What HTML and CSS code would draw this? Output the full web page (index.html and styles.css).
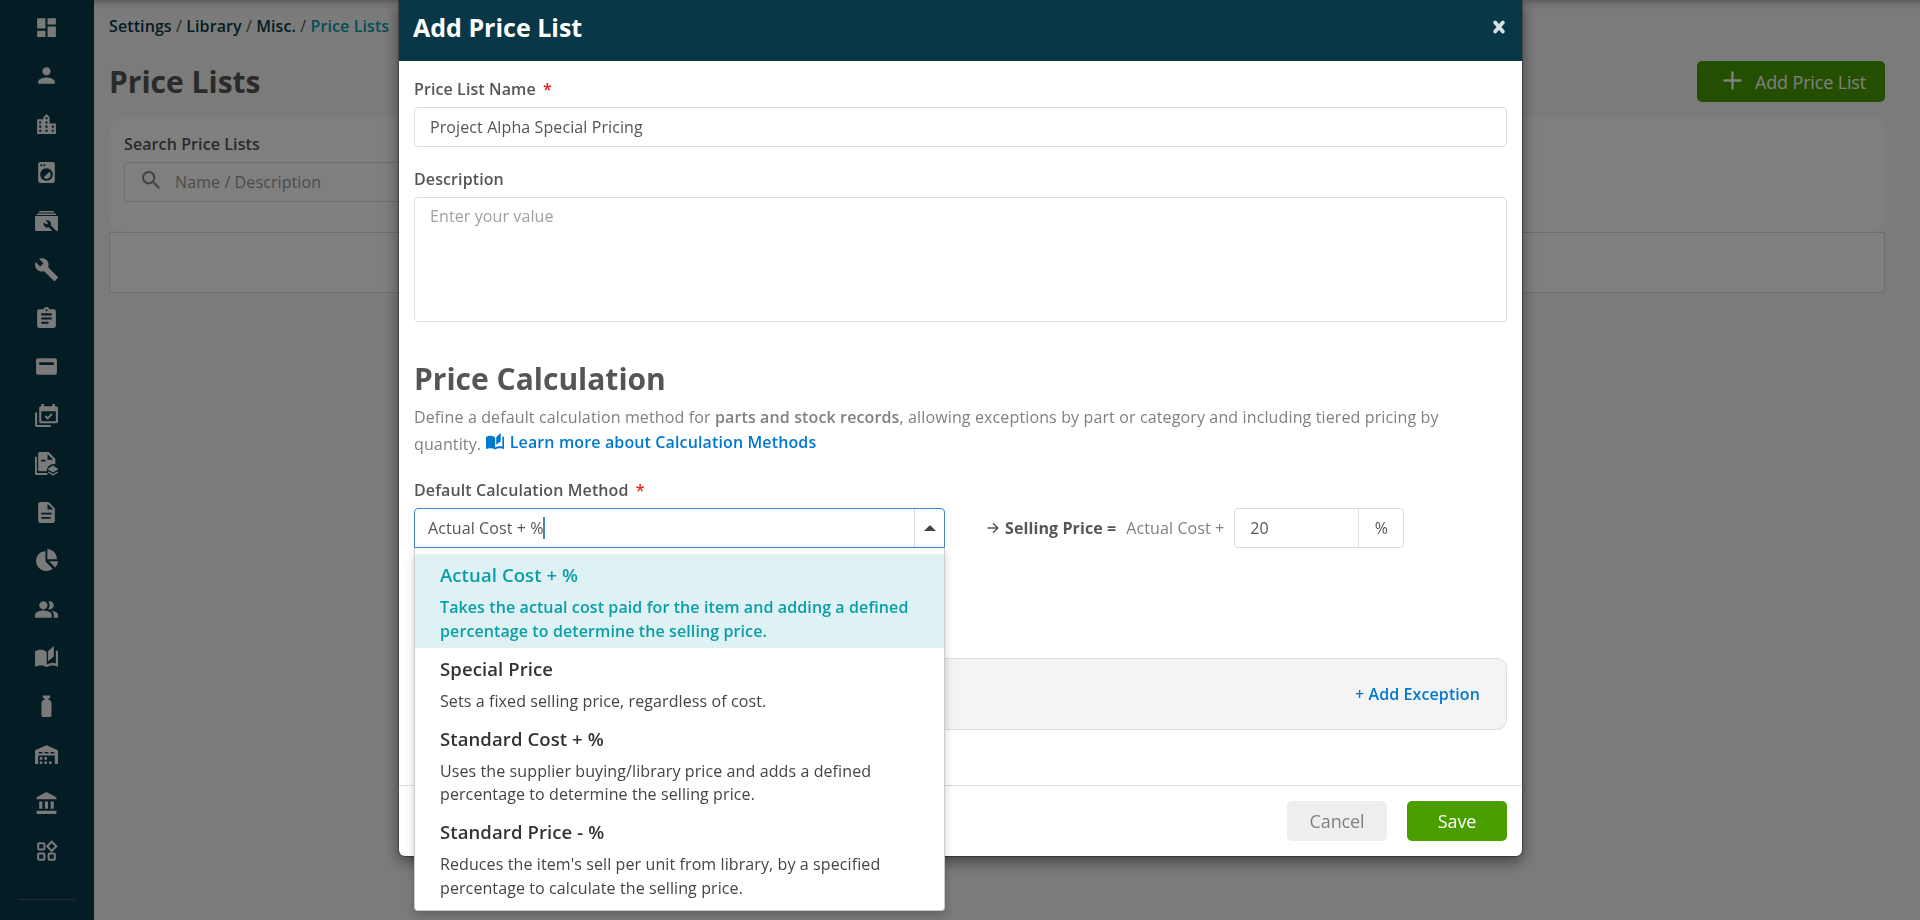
FILE: index.html
```html
<!DOCTYPE html>
<html lang="en">
<head>
    <meta charset="UTF-8">
    <meta name="viewport" content="width=device-width, initial-scale=1.0">
    <title>Price Lists</title>
    <link rel="stylesheet" href="styles.css">
</head>
<body>
    <div class="app">
        <nav class="sidebar">
            <svg viewBox="0 0 24 24"><path d="M3 13h8V3H3v10zm0 8h8v-6H3v6zm10 0h8V11h-8v10zm0-18v6h8V3h-8z"/></svg>
            <svg viewBox="0 0 24 24"><path d="M12 12c2.21 0 4-1.79 4-4s-1.79-4-4-4-4 1.79-4 4 1.79 4 4 4zm0 2c-2.67 0-8 1.34-8 4v2h16v-2c0-2.66-5.33-4-8-4z"/></svg>
            <svg viewBox="0 0 24 24"><path d="M15 11V5l-3-3-3 3v2H3v14h18V11h-6zm-8 8H5v-2h2v2zm0-4H5v-2h2v2zm0-4H5V9h2v2zm6 8h-2v-2h2v2zm0-4h-2v-2h2v2zm0-4h-2V9h2v2zm0-4h-2V5h2v2zm6 12h-2v-2h2v2zm0-4h-2v-2h2v2z"/></svg>
            <svg viewBox="0 0 24 24"><path d="M9.17 16.83c1.56 1.56 4.1 1.56 5.66 0 1.56-1.56 1.56-4.1 0-5.66l-5.66 5.66zM18 2.01L6 2c-1.11 0-2 .89-2 2v16c0 1.11.89 2 2 2h12c1.11 0 2-.89 2-2V4c0-1.11-.89-1.99-2-1.99zM10 4c.55 0 1 .45 1 1s-.45 1-1 1-1-.45-1-1 .45-1 1-1zM7 4c.55 0 1 .45 1 1s-.45 1-1 1-1-.45-1-1 .45-1 1-1zm5 16c-3.31 0-6-2.69-6-6s2.690-6 6-6 6 2.690 6 6-2.690 6-6 6z"/></svg>
            <svg viewBox="0 0 24 24"><path d="M5.500 2h13l1.300 1.400H4.200zM3.500 4.300h17l1.300 1.500H2.200z"/><path fill-rule="evenodd" d="M2 6.600h20c.6 0 1 .4 1 1V20c0 .6-.4 1-1 1h-.6l-5.300-5.300c.5-1.300.2-2.800-.9-3.900-1.100-1.100-2.700-1.300-4-.7l2.300 2.300-1.600 1.600-2.400-2.300c-.6 1.300-.3 2.900.8 4 1.100 1.100 2.600 1.400 3.900.9L17.600 21H2c-.6 0-1-.4-1-1V7.600c0-.6.400-1 1-1z"/></svg>
            <svg viewBox="0 0 24 24"><path d="M22.700 19l-9.100-9.100c.9-2.300.4-5-1.500-6.900-2-2-5-2.400-7.400-1.300L9 6 6 9 1.600 4.700C.4 7.100.9 10.100 2.900 12.100c1.900 1.900 4.600 2.400 6.900 1.500l9.100 9.100c.4.4 1 .4 1.400 0l2.300-2.300c.5-.4.5-1.100.1-1.400z"/></svg>
            <svg viewBox="0 0 24 24"><path d="M19 3h-4.180C14.400 1.840 13.300 1 12 1c-1.300 0-2.400.84-2.820 2H5c-1.100 0-2 .9-2 2v14c0 1.100.9 2 2 2h14c1.100 0 2-.9 2-2V5c0-1.100-.9-2-2-2zm-7 0c.55 0 1 .45 1 1s-.45 1-1 1-1-.45-1-1 .45-1 1-1zm2 14H7v-2h7v2zm3-4H7v-2h10v2zm0-4H7V7h10v2z"/></svg>
            <svg viewBox="0 0 24 24"><path d="M20 4H4c-1.110 0-2 .89-2 2v12c0 1.110.89 2 2 2h16c1.110 0 2-.89 2-2V6c0-1.110-.89-2-2-2zm-1 6.500H5v-2.500h14z"/></svg>
            <svg viewBox="0 0 24 24"><path d="M1 9h2v12h13v2H3c-1.100 0-2-.9-2-2z"/><path fill-rule="evenodd" d="M21 3h-1V1h-2.500v2h-8V1H7v2H6.500C5.600 3 5 3.700 5 4.500V18c0 1 .7 1.500 1.500 1.500H21c1 0 2-.6 2-1.500V4.500C23 3.600 22 3 21 3zm0 14.500H7V8h14z"/><path d="M13.100 16l-3-3 1.300-1.300 1.700 1.700 3.600-3.600L18 11.100z"/></svg>
            <svg viewBox="0 0 24 24"><path d="M1 5.500h1.800v15.700h10V23H2.500C1.700 23 1 22.400 1 21.500z"/><path fill-rule="evenodd" d="M5.500 1H14l6.500 6.500v5.200C16 12 12.300 15 12.300 19.500H6c-1 0-2-.6-2-1.500V2.500C4 1.700 4.700 1 5.500 1zM13 3v5.500h5.500zM7 8.500V10h4V8.500z"/><path d="M18.200 14l5.300 3.300-5.300 3.300-5.300-3.300zM14 19.600l4.200 2.500 4.200-2.500 1.100.9-5.300 3.300-5.300-3.300z"/></svg>
            <svg viewBox="0 0 24 24"><path d="M14 2H6c-1.100 0-1.990.9-1.990 2L4 20c0 1.100.89 2 1.990 2H18c1.100 0 2-.9 2-2V8l-6-6zm2 16H7v-1.800h9V18zm1-4H7v-1.800h10V14zm-4-5V3.500L18.500 9H13z"/></svg>
            <svg viewBox="0 0 24 24"><path d="M11 3v10l7 7c-1.800 1.300-3.800 2-6 2-5.500 0-10-4-10-9.500S6 3 11 3z"/><path d="M12.800 1c5 .2 9.200 4.500 9.200 9.800h-9.200zM14.500 12.600H23c-.2 2.400-1.200 4.500-2.700 6z"/></svg>
            <svg viewBox="0 0 24 24"><path fill-rule="evenodd" d="M16.670 13.130C18.040 14.060 19 15.320 19 17v3h4v-3c0-2.180-3.570-3.470-6.330-3.870zM15 12c2.210 0 4-1.790 4-4s-1.790-4-4-4c-.47 0-.91.1-1.330.240C14.500 5.270 15 6.580 15 8s-.5 2.730-1.330 3.760c.42.140.86.240 1.330.240zM9 12c2.210 0 4-1.790 4-4s-1.790-4-4-4-4 1.790-4 4 1.790 4 4 4zm0 1c-2.670 0-8 1.340-8 4v3h16v-3c0-2.660-5.330-4-8-4z"/></svg>
            <svg viewBox="0 0 24 24"><path d="M12.200 6.500C10.600 5.200 8.500 4.500 6.500 4.500S2.500 5 1 6.100V21c1.500-1 3.500-1.400 5.500-1.400 2 0 4.100.4 5.700 1.700 1.500-1.200 3.500-1.700 5.300-1.700 2 0 4 .4 5.500 1.400V6.100c-.6-.5-1.300-.8-2-1v12.700c-1.100-.4-2.300-.5-3.500-.5-1.700 0-4 .6-5.300 1.500zM19 1l-5.500 5v9.500l5.500-4.500z"/></svg>
            <svg viewBox="0 0 24 24"><path d="M8.500 1.500h7V4h-1.700v1.300c2.200.7 3 2 3 4V20.500c0 1-.5 1.500-1.500 1.500H8.700c-1 0-1.500-.5-1.500-1.500V9.300c0-2 .8-3.300 3-4V4H8.500z"/></svg>
            <svg viewBox="0 0 24 24"><path fill-rule="evenodd" d="M12 3L1 8v13h3V13h16v8h3V8zM4.500 9.500H8V11H4.500zm5.700 0h3.600V11h-3.600zm5.800 0h3.500V11H16z"/><path d="M5.500 14.500H8V17H5.500zM10 14.500h2.500V17H10zM5.500 18.700H8V21H5.500zM10 18.700h2.500V21H10zM14.500 18.700H17V21h-2.500z"/></svg>
            <svg viewBox="0 0 24 24"><path d="M5 10v7h3v-7H5zm5.500 0v7h3v-7h-3zM2.500 22h19v-3h-19v3zM16 10v7h3v-7h-3zM12 1L2.500 6v2h19V6L12 1z"/></svg>
            <svg viewBox="0 0 24 24" class="outline"><rect x="4" y="4" width="6" height="6" rx="1"/><rect x="4" y="14" width="6" height="6" rx="1"/><rect x="14" y="14" width="6" height="6" rx="1"/><path d="M17 2.600L21.400 7 17 11.400 12.600 7z"/></svg>
            <hr>
        </nav>

        <main class="page">
            <div class="breadcrumb">
                <b>Settings</b> / <b>Library</b> / <b>Misc.</b> / <b class="current">Price Lists</b>
            </div>
            <div class="page-head">
                <h1>Price Lists</h1>
                <button class="add-button">
                    <svg viewBox="0 0 20 20"><path d="M10 0.500v19M0.500 10h19"/></svg>
                    Add Price List
                </button>
            </div>
            <div class="search-card">
                <label>Search Price Lists</label>
                <div class="search-input">
                    <svg viewBox="0 0 18 18"><path d="M12.860 11.320h-.81l-.29-.28a6.700 6.700 0 1 0-.72.720l.28.29v.81L16.470 18 18 16.470zm-6.170 0a4.630 4.630 0 1 1 0-9.260 4.630 4.630 0 0 1 0 9.260z"/></svg>
                    <span>Name / Description</span>
                </div>
            </div>
            <div class="table-box"></div>
        </main>
    </div>

    <div class="overlay">
        <div class="modal">
            <header class="modal-header">
                <h2>Add Price List</h2>
                <svg class="close" viewBox="0 0 12 14"><path d="M2.200 2.500l7.600 9M9.800 2.500l-7.600 9"/></svg>
            </header>

            <div class="modal-body">
                <label>Price List Name <i>*</i></label>
                <div class="field">Project Alpha Special Pricing</div>

                <label class="description-label">Description</label>
                <div class="field textarea">Enter your value</div>

                <h3>Price Calculation</h3>
                <p class="intro">Define a default calculation method for <b>parts and stock records</b>, allowing exceptions by part or category and including tiered pricing by quantity. <a><svg viewBox="0 0 24 22"><path d="M12.200 5.500C10.600 4.200 8.500 3.500 6.500 3.500S2.500 4 1 5.100V20c1.500-1 3.500-1.400 5.500-1.400 2 0 4.100.4 5.700 1.700 1.500-1.200 3.500-1.700 5.300-1.700 2 0 4 .4 5.500 1.400V5.100c-.6-.5-1.300-.8-2-1v12.700c-1.100-.4-2.300-.5-3.500-.5-1.700 0-4 .6-5.300 1.500zM19 0l-5.500 5v9.500l5.500-4.500z"/></svg> Learn more about Calculation Methods</a></p>

                <label>Default Calculation Method <i>*</i></label>
                <div class="calc-row">
                    <div class="select">
                        <div class="select-value">Actual Cost + %<span class="caret"></span></div>
                        <div class="select-arrow"></div>
                        <ul class="dropdown">
                            <li class="active">
                                <h4>Actual Cost + %</h4>
                                <p>Takes the actual cost paid for the item and adding a defined percentage to determine the selling price.</p>
                            </li>
                            <li>
                                <h4>Special Price</h4>
                                <p>Sets a fixed selling price, regardless of cost.</p>
                            </li>
                            <li>
                                <h4>Standard Cost + %</h4>
                                <p>Uses the supplier buying/library price and adds a defined percentage to determine the selling price.</p>
                            </li>
                            <li>
                                <h4>Standard Price - %</h4>
                                <p>Reduces the item's sell per unit from library, by a specified percentage to calculate the selling price.</p>
                            </li>
                        </ul>
                    </div>
                    <div class="formula">
                        <svg viewBox="0 0 12 12"><path d="M0.500 6h10M6 1.200L10.800 6 6 10.800"/></svg>
                        <b>Selling Price =</b>
                        <span>Actual Cost +</span>
                        <div class="percent-input">
                            <div class="amount">20</div>
                            <div class="unit">%</div>
                        </div>
                    </div>
                </div>

                <div class="exceptions">
                    <a>+ Add Exception</a>
                </div>
            </div>

            <footer class="modal-footer">
                <button class="cancel">Cancel</button>
                <button class="save">Save</button>
            </footer>
        </div>
    </div>
</body>
</html>
```
FILE: styles.css
```css
:root {
    --navy: #083848;
    --green: #4a9e00;
    --teal: #0a9ea8;
    --blue: #0078d0;
    --text: #555;
    --muted: #808080;
    --border: #ddd;
}

* {
    box-sizing: border-box;
}

body {
    margin: 0;
    height: 920px;
    overflow: hidden;
    font-family: "Open Sans", "Noto Sans", sans-serif;
    font-size: 16px;
    line-height: 24px;
    letter-spacing: 0.1px;
    color: var(--text);
    background: #f6f6f6;
}

h1, h2, h3, h4, p, ul {
    margin: 0;
    padding: 0;
}

h1, h2, h3 {
    letter-spacing: 0;
}

label {
    display: block;
    font-weight: 600;
}

label i {
    color: #f02020;
    font-style: normal;
    margin-left: 3px;
}

button {
    border: none;
    border-radius: 5px;
    font-family: inherit;
    font-size: 18px;
    letter-spacing: -0.15px;
}

.app {
    display: flex;
    height: 920px;
}

/* sidebar */
.sidebar {
    width: 94px;
    padding: 14.500px 0 0;
    background: var(--navy);
    display: flex;
    flex-direction: column;
    align-items: center;
    gap: 23.530px;
}

.sidebar svg {
    width: 25px;
    height: 25px;
    flex: none;
    fill: #f4f4f4;
    margin-right: 1px;
}

.sidebar svg.outline {
    fill: none;
    stroke: #f4f4f4;
    stroke-width: 1.900;
}

.sidebar hr {
    width: 56px;
    margin: 11px 0 0;
    border: none;
    border-top: 1px solid #40576a;
}

/* page behind the dialog */
.page {
    flex: 1;
    padding: 14px 35px 0 15px;
    box-shadow: inset 0 10px 9px -9px rgba(0, 0, 0, 0.4);
}

.breadcrumb b {
    font-weight: 600;
    color: var(--navy);
}

.breadcrumb b.current {
    color: var(--teal);
}

.page-head {
    display: flex;
    justify-content: space-between;
    align-items: center;
    height: 41px;
    margin-top: 23px;
}

.page-head h1 {
    font-size: 30px;
}

.add-button {
    display: flex;
    align-items: center;
    width: 188px;
    height: 41px;
    padding: 0 0 0 26px;
    color: #fff;
    background: var(--green);
    white-space: nowrap;
}

.add-button svg {
    width: 19px;
    height: 19px;
    margin: 0 13px 3px 0;
    fill: none;
    stroke: #fff;
    stroke-width: 2.500;
}

.search-card {
    height: 115px;
    margin-top: 15px;
    padding: 15px;
    border-radius: 15px;
    background: #fff;
}

.search-input {
    display: flex;
    align-items: center;
    width: 400px;
    height: 40px;
    margin-top: 6px;
    padding-left: 17px;
    border: 1px solid var(--border);
    border-radius: 4px;
    color: #999;
}

.search-input svg {
    width: 18px;
    height: 18px;
    margin: 0 15px 4px 0;
    fill: #888;
}

.table-box {
    height: 61px;
    border: 1px solid var(--border);
    background: #fff;
}

/* dialog */
.overlay {
    position: fixed;
    inset: 0;
    background: rgba(0, 0, 0, 0.5);
}

.modal {
    display: flex;
    flex-direction: column;
    width: 1123px;
    height: 856px;
    margin-left: 399px;
    border-radius: 0 0 6px 6px;
    background: #fff;
    box-shadow: 0 5px 15px rgba(0, 0, 0, 0.5), 0 0 1px 1px rgba(0, 0, 0, 0.3);
}

.modal-header {
    display: flex;
    justify-content: space-between;
    height: 61px;
    padding: 9px 17px 0 14px;
    color: #fff;
    background: var(--navy);
}

.modal-header h2 {
    font-size: 25px;
    line-height: 36px;
}

.close {
    width: 12px;
    height: 14px;
    margin-top: 11px;
    stroke: #d5dee1;
    stroke-width: 3.800;
    stroke-linecap: round;
}

.modal-body {
    flex: 1;
    padding: 16px 15px 0;
}

.field {
    height: 40px;
    margin-top: 6px;
    padding: 7px 15px;
    border: 1px solid var(--border);
    border-radius: 4px;
}

.description-label {
    margin-top: 20px;
}

.textarea {
    height: 125px;
    padding-top: 6px;
    color: #a0a0a0;
}

.modal-body h3 {
    margin-top: 38px;
    font-size: 30px;
    line-height: 38px;
}

.intro {
    margin: 6px 0 20px;
    padding-right: 60px;
    line-height: 27px;
    letter-spacing: 0.13px;
    color: var(--muted);
}

.intro b {
    font-weight: 600;
}

.intro a {
    position: relative;
    top: -2px;
}

.modal-body a {
    color: var(--blue);
    font-weight: 600;
}

.intro svg {
    width: 20px;
    height: 18px;
    fill: var(--blue);
    vertical-align: -3px;
}

.calc-row {
    display: flex;
    margin-top: 6px;
}

.select {
    position: relative;
    display: flex;
    width: 531px;
    height: 40px;
    border: 1px solid #3a87c8;
    border-radius: 4px 4px 0 0;
}

.select-value {
    flex: 1;
    display: flex;
    align-items: center;
    padding-left: 13px;
}

.caret {
    width: 2px;
    height: 22px;
    margin-left: -1px;
    background: #3a87c8;
}

.select-arrow {
    display: flex;
    align-items: center;
    justify-content: center;
    width: 30px;
    border-left: 1px solid var(--border);
}

.select-arrow::after {
    content: "";
    border: 6px solid transparent;
    border-top: none;
    border-bottom-color: #444;
}

.dropdown {
    position: absolute;
    top: 39px;
    left: -1px;
    width: 531px;
    height: 363px;
    padding-top: 6px;
    list-style: none;
    color: #444;
    background: #fff;
    border: 1px solid #ccc;
    border-top: none;
    border-radius: 0 0 4px 4px;
    box-shadow: 0 5px 10px rgba(0, 0, 0, 0.2);
}

.dropdown li {
    padding: 9px 25px 4.400px;
    line-height: 23.600px;
}

.dropdown h4 {
    margin-bottom: 9px;
    font-size: 18.500px;
    font-weight: 600;
    line-height: 24px;
    color: #333;
}

.dropdown .active {
    background: #def1f3;
    font-weight: 600;
}

.dropdown .active, .dropdown .active h4 {
    color: var(--teal);
}

.formula {
    display: flex;
    align-items: center;
    padding-left: 42px;
    white-space: nowrap;
}

.formula svg {
    width: 12px;
    height: 12px;
    margin-right: 6px;
    fill: none;
    stroke: #555;
    stroke-width: 1.500;
}

.formula span {
    margin: 0 10px;
    color: var(--muted);
}

.percent-input {
    display: flex;
    width: 170px;
    height: 40px;
    border: 1px solid var(--border);
    border-radius: 4px;
    line-height: 38px;
}

.amount {
    flex: 1;
    padding-left: 15px;
}

.unit {
    width: 45px;
    border-left: 1px solid var(--border);
    text-align: center;
}

.exceptions {
    display: flex;
    align-items: center;
    justify-content: flex-end;
    height: 72px;
    margin-top: 110px;
    padding-right: 26px;
    border: 1px solid var(--border);
    border-radius: 10px;
    background: #f4f4f4;
}

.modal-footer {
    display: flex;
    justify-content: flex-end;
    gap: 20px;
    height: 71px;
    padding: 15px;
    border-top: 1px solid var(--border);
}

.modal-footer button {
    width: 100px;
    height: 40px;
}

.cancel {
    color: #808080;
    background: #eee;
}

.save {
    color: #fff;
    background: var(--green);
    font-weight: 500;
}
```
